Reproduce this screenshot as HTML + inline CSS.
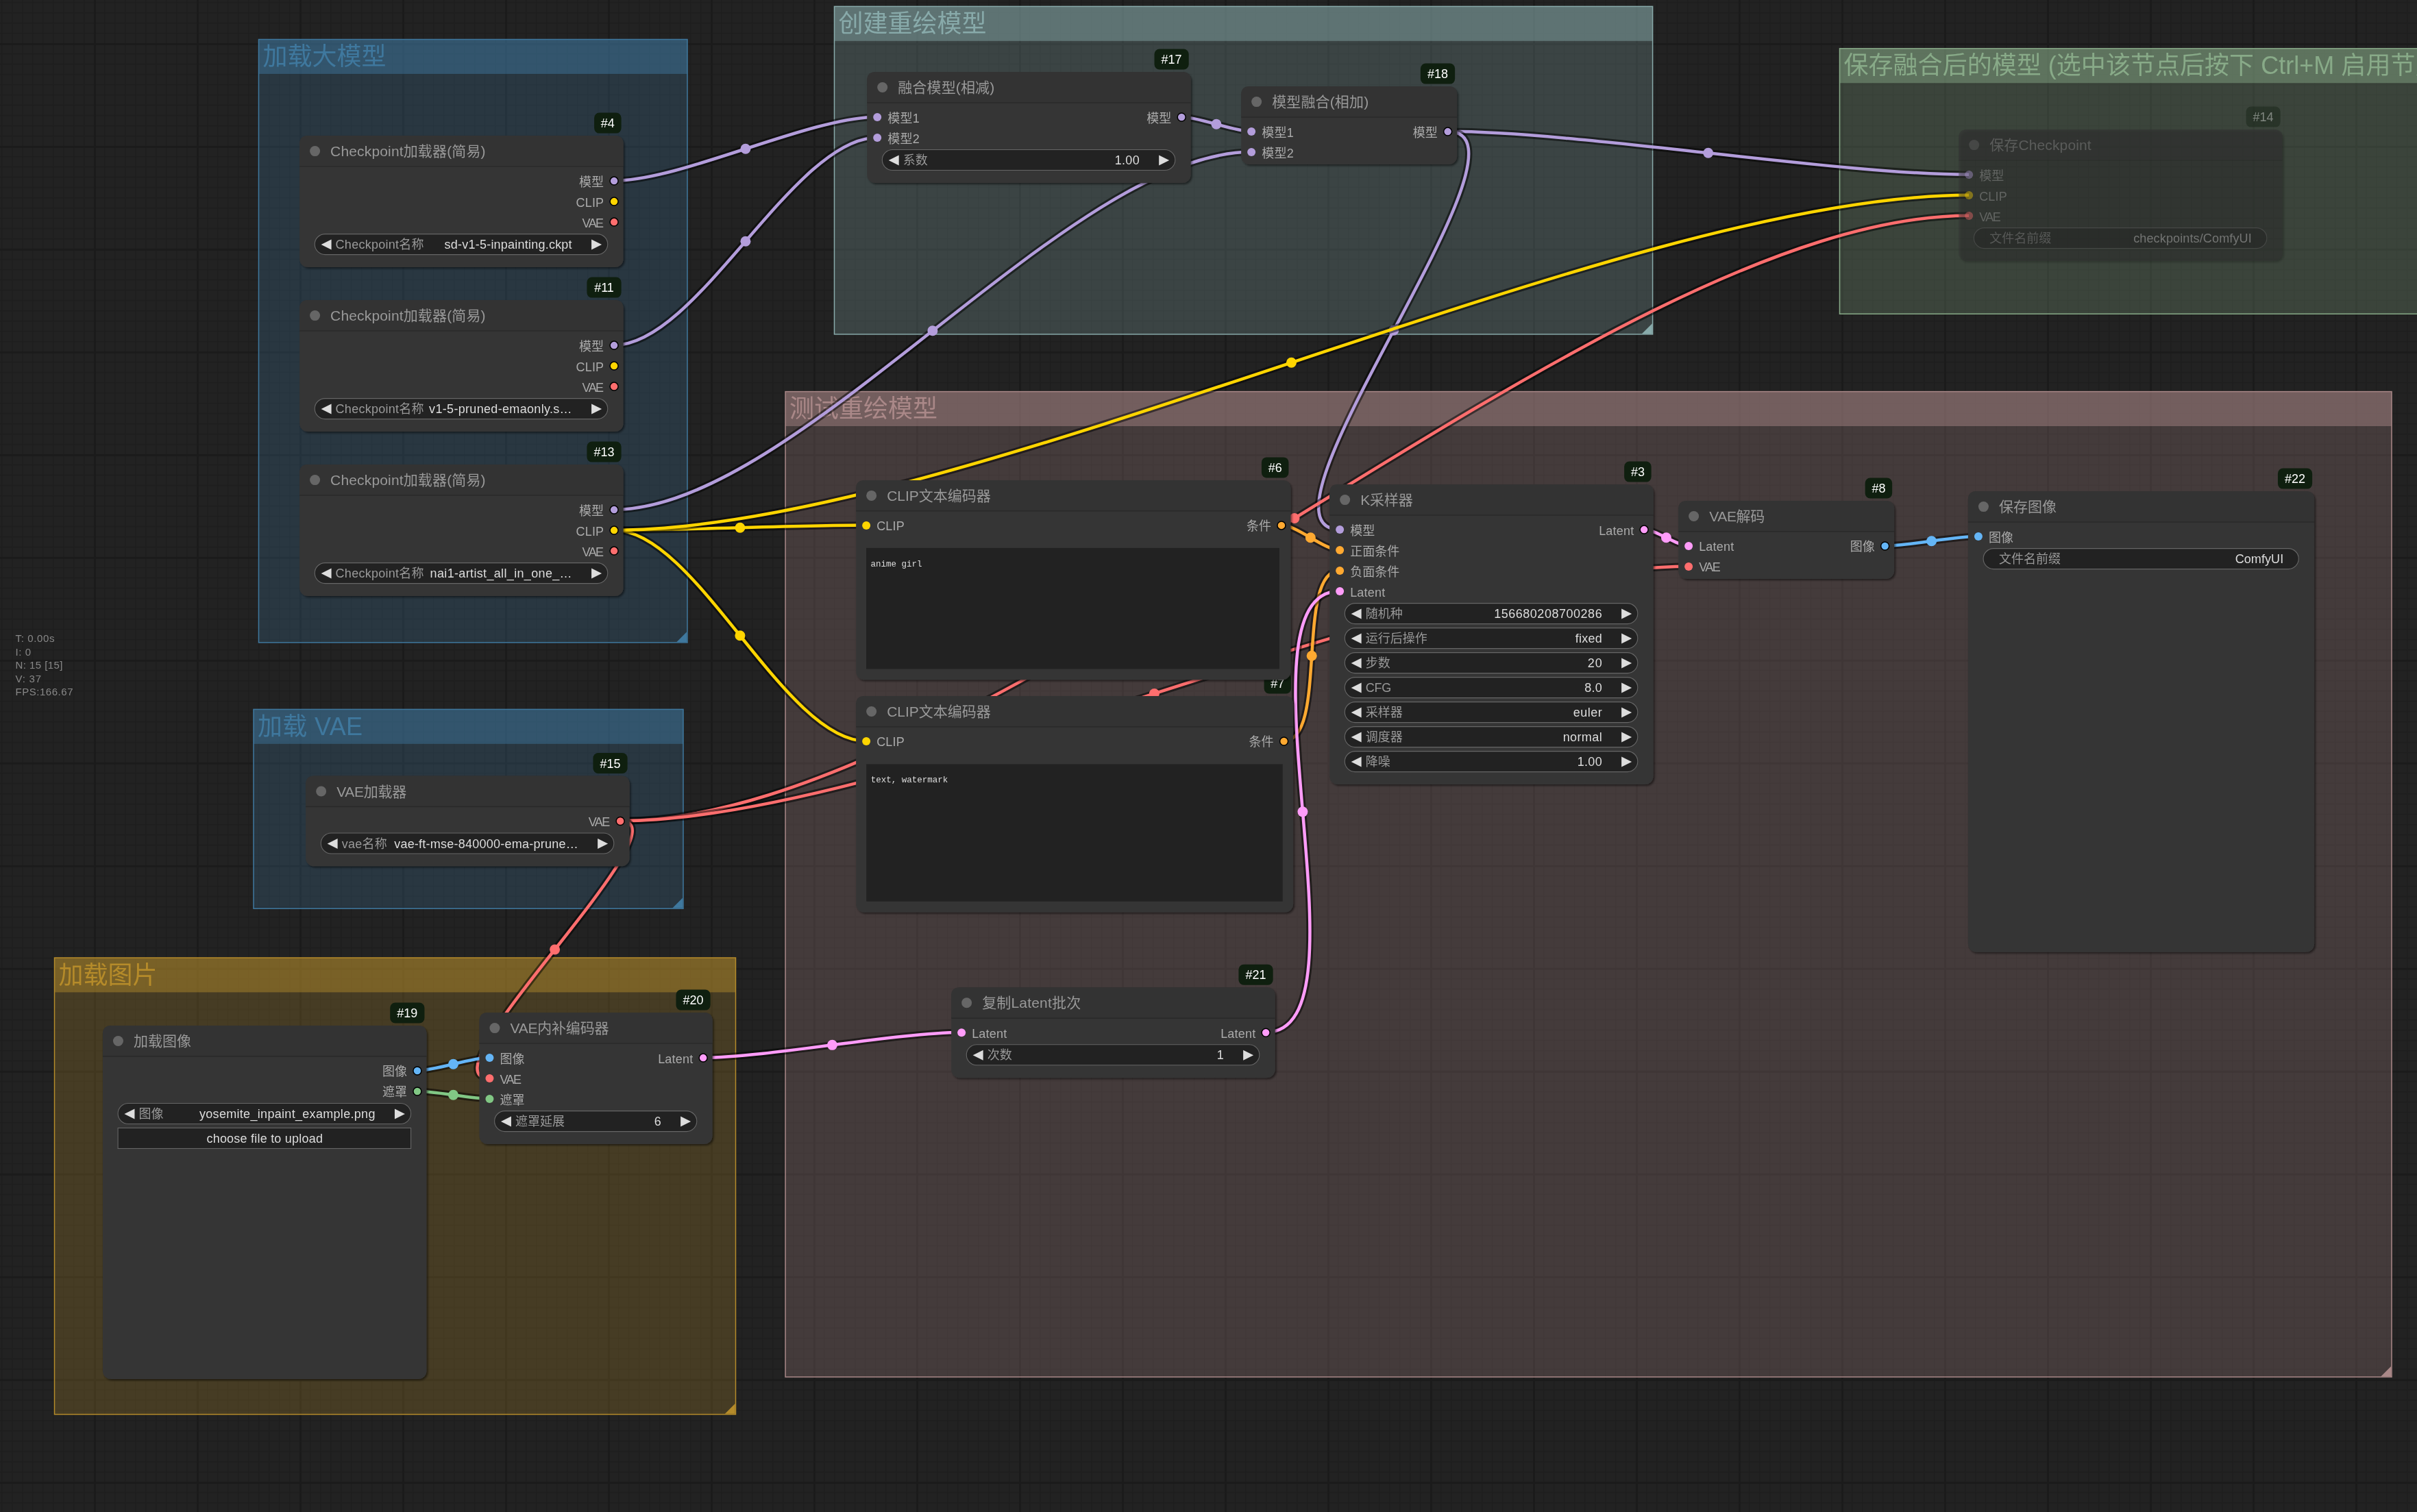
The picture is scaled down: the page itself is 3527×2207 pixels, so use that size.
<!DOCTYPE html>
<html lang="zh-CN"><head><meta charset="utf-8"><title>ComfyUI</title>
<style>html,body{margin:0;padding:0;background:#222;overflow:hidden}svg{display:block;will-change:transform}text{font-family:'Liberation Sans','Noto Sans CJK SC',sans-serif;white-space:pre}.t{font-size:21px;fill:#999}.s{font-size:18px;fill:#AAA}.wl{font-size:18px;fill:#999}.wv{font-size:18px;fill:#DDD}.e{text-anchor:end}.m{text-anchor:middle}.b{font-size:18px;fill:#fff;text-anchor:middle}.g{font-size:36px}.i{font-size:15px;fill:#888}.a{font-family:'Liberation Mono','Noto Sans CJK SC',monospace;font-size:12.5px;fill:#ddd}</style></head><body>
<svg xmlns="http://www.w3.org/2000/svg" width="3527" height="2207" viewBox="0 0 3527 2207">
<defs>
<pattern id="grid" x="136.94" y="62.87" width="150" height="150" patternUnits="userSpaceOnUse"><rect width="150" height="150" fill="#222"/><rect x="15" y="0" width="1.5" height="150" fill="#1e1e1e"/><rect x="0" y="15" width="150" height="1.5" fill="#1e1e1e"/><rect x="30" y="0" width="1.5" height="150" fill="#1e1e1e"/><rect x="0" y="30" width="150" height="1.5" fill="#1e1e1e"/><rect x="45" y="0" width="1.5" height="150" fill="#1e1e1e"/><rect x="0" y="45" width="150" height="1.5" fill="#1e1e1e"/><rect x="60" y="0" width="1.5" height="150" fill="#1e1e1e"/><rect x="0" y="60" width="150" height="1.5" fill="#1e1e1e"/><rect x="75" y="0" width="1.5" height="150" fill="#1e1e1e"/><rect x="0" y="75" width="150" height="1.5" fill="#1e1e1e"/><rect x="90" y="0" width="1.5" height="150" fill="#1e1e1e"/><rect x="0" y="90" width="150" height="1.5" fill="#1e1e1e"/><rect x="105" y="0" width="1.5" height="150" fill="#1e1e1e"/><rect x="0" y="105" width="150" height="1.5" fill="#1e1e1e"/><rect x="120" y="0" width="1.5" height="150" fill="#1e1e1e"/><rect x="0" y="120" width="150" height="1.5" fill="#1e1e1e"/><rect x="135" y="0" width="1.5" height="150" fill="#1e1e1e"/><rect x="0" y="135" width="150" height="1.5" fill="#1e1e1e"/><rect x="0" y="0" width="3" height="150" fill="#1b1b1b"/><rect x="0" y="0" width="150" height="3" fill="#1b1b1b"/></pattern>
<filter id="sh" x="-5%" y="-5%" width="110%" height="115%"><feDropShadow dx="2" dy="2" stdDeviation="1.5" flood-color="#000" flood-opacity="0.5"/></filter>
<filter id="bl" x="-5%" y="-10%" width="110%" height="120%"><feGaussianBlur stdDeviation="1.5"/></filter>
</defs>
<rect width="3527" height="2207" fill="url(#grid)"/>
<text class="i" x="22.5" y="937.4" textLength="57">T: 0.00s</text>
<text class="i" x="22.5" y="956.9" textLength="22.5">I: 0</text>
<text class="i" x="22.5" y="976.4" textLength="69">N: 15 [15]</text>
<text class="i" x="22.5" y="995.9" textLength="37.5">V: 37</text>
<text class="i" x="22.5" y="1015.4" textLength="84">FPS:166.67</text>
<g id="groups">
<rect x="377.5" y="57.5" width="625.5" height="50.4" fill="#3f789e" fill-opacity="0.467"/>
<rect x="377.5" y="57.5" width="625.5" height="880.4" fill="#3f789e" fill-opacity="0.25" stroke="#3f789e" stroke-width="1.5"/>
<path d="M1002.25 937.15L987.25 937.15L1002.25 922.15Z" fill="#3f789e"/>
<text class="g" x="383.5" y="95" fill="#3f789e">加载大模型</text>
<rect x="1217.5" y="9.4" width="1194.1" height="50.4" fill="#88AAAA" fill-opacity="0.467"/>
<rect x="1217.5" y="9.4" width="1194.1" height="478.5" fill="#88AAAA" fill-opacity="0.25" stroke="#88AAAA" stroke-width="1.5"/>
<path d="M2410.85 487.15L2395.85 487.15L2410.85 472.15Z" fill="#88AAAA"/>
<text class="g" x="1223.5" y="46.9" fill="#88AAAA">创建重绘模型</text>
<rect x="2684.5" y="70.8" width="915.5" height="50.4" fill="#88AA88" fill-opacity="0.467"/>
<rect x="2684.5" y="70.8" width="915.5" height="387.4" fill="#88AA88" fill-opacity="0.25" stroke="#88AA88" stroke-width="1.5"/>
<path d="M3599.25 457.45L3584.25 457.45L3599.25 442.45Z" fill="#88AA88"/>
<text class="g" x="2690.5" y="108.3" fill="#88AA88" textLength="882">保存融合后的模型 (选中该节点后按下 Ctrl+M 启用节点)</text>
<rect x="1146.1" y="571.6" width="2343.9" height="50.4" fill="#AA8888" fill-opacity="0.467"/>
<rect x="1146.1" y="571.6" width="2343.9" height="1438.3" fill="#AA8888" fill-opacity="0.25" stroke="#AA8888" stroke-width="1.5"/>
<path d="M3489.25 2009.15L3474.25 2009.15L3489.25 1994.15Z" fill="#AA8888"/>
<text class="g" x="1152.1" y="609.1" fill="#AA8888">测试重绘模型</text>
<rect x="370" y="1035.4" width="627" height="50.4" fill="#3f789e" fill-opacity="0.467"/>
<rect x="370" y="1035.4" width="627" height="290.8" fill="#3f789e" fill-opacity="0.25" stroke="#3f789e" stroke-width="1.5"/>
<path d="M996.25 1325.45L981.25 1325.45L996.25 1310.45Z" fill="#3f789e"/>
<text class="g" x="376" y="1072.9" fill="#3f789e" textLength="153">加载 VAE</text>
<rect x="79.5" y="1398" width="994" height="50.4" fill="#b58b2a" fill-opacity="0.467"/>
<rect x="79.5" y="1398" width="994" height="666.5" fill="#b58b2a" fill-opacity="0.25" stroke="#b58b2a" stroke-width="1.5"/>
<path d="M1072.75 2063.75L1057.75 2063.75L1072.75 2048.75Z" fill="#b58b2a"/>
<text class="g" x="85.5" y="1435.5" fill="#b58b2a">加载图片</text>
</g>
<g id="links" fill="none" transform="translate(-0.2 -0.3)">
<path d="M896.1 264.1C994.91 264.1 1181.39 171 1280.2 171" stroke="rgba(0,0,0,0.5)" stroke-width="10.5"/>
<path d="M896.1 264.1C994.91 264.1 1181.39 171 1280.2 171" stroke="#B39DDB" stroke-width="4.5"/>
<circle cx="1088.15" cy="217.55" r="7.5" fill="#B39DDB"/>
<path d="M896.1 504.1C1018.42 504.1 1157.88 201 1280.2 201" stroke="rgba(0,0,0,0.5)" stroke-width="10.5"/>
<path d="M896.1 504.1C1018.42 504.1 1157.88 201 1280.2 201" stroke="#B39DDB" stroke-width="4.5"/>
<circle cx="1088.15" cy="352.55" r="7.5" fill="#B39DDB"/>
<path d="M896.1 744.1C1162.73 744.1 1559.52 222.1 1826.15 222.1" stroke="rgba(0,0,0,0.5)" stroke-width="10.5"/>
<path d="M896.1 744.1C1162.73 744.1 1559.52 222.1 1826.15 222.1" stroke="#B39DDB" stroke-width="4.5"/>
<circle cx="1361.12" cy="483.1" r="7.5" fill="#B39DDB"/>
<path d="M1724.2 171C1750.23 171 1800.12 192.1 1826.15 192.1" stroke="rgba(0,0,0,0.5)" stroke-width="10.5"/>
<path d="M1724.2 171C1750.23 171 1800.12 192.1 1826.15 192.1" stroke="#B39DDB" stroke-width="4.5"/>
<circle cx="1775.17" cy="181.55" r="7.5" fill="#B39DDB"/>
<path d="M2112.65 192.1C2303.44 192.1 2682.41 255.1 2873.2 255.1" stroke="rgba(0,0,0,0.5)" stroke-width="10.5"/>
<path d="M2112.65 192.1C2303.44 192.1 2682.41 255.1 2873.2 255.1" stroke="#B39DDB" stroke-width="4.5"/>
<circle cx="2492.92" cy="223.6" r="7.5" fill="#B39DDB"/>
<path d="M2112.65 192.1C2263.14 192.1 1804.66 773.1 1955.15 773.1" stroke="rgba(0,0,0,0.5)" stroke-width="10.5"/>
<path d="M2112.65 192.1C2263.14 192.1 1804.66 773.1 1955.15 773.1" stroke="#B39DDB" stroke-width="4.5"/>
<circle cx="2033.9" cy="482.6" r="7.5" fill="#B39DDB"/>
<path d="M896.1 774.1C988.13 774.1 1172.12 766.9 1264.15 766.9" stroke="rgba(0,0,0,0.5)" stroke-width="10.5"/>
<path d="M896.1 774.1C988.13 774.1 1172.12 766.9 1264.15 766.9" stroke="#FFD500" stroke-width="4.5"/>
<circle cx="1080.12" cy="770.5" r="7.5" fill="#FFD500"/>
<path d="M896.1 774.1C1016.06 774.1 1144.19 1081.95 1264.15 1081.95" stroke="rgba(0,0,0,0.5)" stroke-width="10.5"/>
<path d="M896.1 774.1C1016.06 774.1 1144.19 1081.95 1264.15 1081.95" stroke="#FFD500" stroke-width="4.5"/>
<circle cx="1080.12" cy="928.02" r="7.5" fill="#FFD500"/>
<path d="M896.1 774.1C1405.27 774.1 2364.03 285.1 2873.2 285.1" stroke="rgba(0,0,0,0.5)" stroke-width="10.5"/>
<path d="M896.1 774.1C1405.27 774.1 2364.03 285.1 2873.2 285.1" stroke="#FFD500" stroke-width="4.5"/>
<circle cx="1884.65" cy="529.6" r="7.5" fill="#FFD500"/>
<path d="M905.15 1198.5C1444.46 1198.5 2333.89 315.1 2873.2 315.1" stroke="rgba(0,0,0,0.5)" stroke-width="10.5"/>
<path d="M905.15 1198.5C1444.46 1198.5 2333.89 315.1 2873.2 315.1" stroke="#FF6E6E" stroke-width="4.5"/>
<circle cx="1889.17" cy="756.8" r="7.5" fill="#FF6E6E"/>
<path d="M905.15 1198.5C1305.82 1198.5 2063.48 826.95 2464.15 826.95" stroke="rgba(0,0,0,0.5)" stroke-width="10.5"/>
<path d="M905.15 1198.5C1305.82 1198.5 2063.48 826.95 2464.15 826.95" stroke="#FF6E6E" stroke-width="4.5"/>
<circle cx="1684.65" cy="1012.73" r="7.5" fill="#FF6E6E"/>
<path d="M905.15 1198.5C1010.46 1198.5 609.14 1574.1 714.45 1574.1" stroke="rgba(0,0,0,0.5)" stroke-width="10.5"/>
<path d="M905.15 1198.5C1010.46 1198.5 609.14 1574.1 714.45 1574.1" stroke="#FF6E6E" stroke-width="4.5"/>
<circle cx="809.8" cy="1386.3" r="7.5" fill="#FF6E6E"/>
<path d="M1869.93 766.9C1893.07 766.9 1932 803.1 1955.15 803.1" stroke="rgba(0,0,0,0.5)" stroke-width="10.5"/>
<path d="M1869.93 766.9C1893.07 766.9 1932 803.1 1955.15 803.1" stroke="#FFA931" stroke-width="4.5"/>
<circle cx="1912.54" cy="785" r="7.5" fill="#FFA931"/>
<path d="M1873.6 1081.95C1939.07 1081.95 1889.68 833.1 1955.15 833.1" stroke="rgba(0,0,0,0.5)" stroke-width="10.5"/>
<path d="M1873.6 1081.95C1939.07 1081.95 1889.68 833.1 1955.15 833.1" stroke="#FFA931" stroke-width="4.5"/>
<circle cx="1914.38" cy="957.53" r="7.5" fill="#FFA931"/>
<path d="M608.95 1562.95C635.74 1562.95 687.66 1544.1 714.45 1544.1" stroke="rgba(0,0,0,0.5)" stroke-width="10.5"/>
<path d="M608.95 1562.95C635.74 1562.95 687.66 1544.1 714.45 1544.1" stroke="#64B5F6" stroke-width="4.5"/>
<circle cx="661.7" cy="1553.52" r="7.5" fill="#64B5F6"/>
<path d="M608.95 1592.95C635.47 1592.95 687.93 1604.1 714.45 1604.1" stroke="rgba(0,0,0,0.5)" stroke-width="10.5"/>
<path d="M608.95 1592.95C635.47 1592.95 687.93 1604.1 714.45 1604.1" stroke="#81C784" stroke-width="4.5"/>
<circle cx="661.7" cy="1598.52" r="7.5" fill="#81C784"/>
<path d="M1026.15 1544.1C1120.85 1544.1 1308.45 1507.2 1403.15 1507.2" stroke="rgba(0,0,0,0.5)" stroke-width="10.5"/>
<path d="M1026.15 1544.1C1120.85 1544.1 1308.45 1507.2 1403.15 1507.2" stroke="#FF9CF9" stroke-width="4.5"/>
<circle cx="1214.65" cy="1525.65" r="7.5" fill="#FF9CF9"/>
<path d="M1847.15 1507.2C2010.42 1507.2 1791.88 863.1 1955.15 863.1" stroke="rgba(0,0,0,0.5)" stroke-width="10.5"/>
<path d="M1847.15 1507.2C2010.42 1507.2 1791.88 863.1 1955.15 863.1" stroke="#FF9CF9" stroke-width="4.5"/>
<circle cx="1901.15" cy="1185.15" r="7.5" fill="#FF9CF9"/>
<path d="M2399.15 773.1C2416.46 773.1 2446.84 796.95 2464.15 796.95" stroke="rgba(0,0,0,0.5)" stroke-width="10.5"/>
<path d="M2399.15 773.1C2416.46 773.1 2446.84 796.95 2464.15 796.95" stroke="#FF9CF9" stroke-width="4.5"/>
<circle cx="2431.65" cy="785.02" r="7.5" fill="#FF9CF9"/>
<path d="M2750.65 796.95C2784.9 796.95 2852.7 783.1 2886.95 783.1" stroke="rgba(0,0,0,0.5)" stroke-width="10.5"/>
<path d="M2750.65 796.95C2784.9 796.95 2852.7 783.1 2886.95 783.1" stroke="#64B5F6" stroke-width="4.5"/>
<circle cx="2818.8" cy="790.03" r="7.5" fill="#64B5F6"/>
</g>
<g id="n4">
<rect x="867.1" y="164.6" width="39.5" height="30" rx="7.5" fill="#0F1F0F"/>
<text class="b" x="886.85" y="186.1">#4</text>
<rect x="437.1" y="198.1" width="472.5" height="192" rx="12" fill="#353535" filter="url(#sh)"/>
<path d="M449.1 198.1H897.6Q909.6 198.1 909.6 210.1V243.1H437.1V210.1Q437.1 198.1 449.1 198.1Z" fill="#333"/>
<rect x="437.1" y="242.35" width="472.5" height="1.5" fill="#000" fill-opacity="0.2"/>
<circle cx="459.6" cy="220.6" r="7.5" fill="#666"/>
<text class="t" x="482.1" y="228.1" textLength="226.5">Checkpoint加载器(简易)</text>
<circle cx="896.1" cy="264.1" r="6" fill="#B39DDB" stroke="#000" stroke-width="1.5"/>
<text class="s e" x="881.1" y="271.6">模型</text>
<circle cx="896.1" cy="294.1" r="6" fill="#FFD500" stroke="#000" stroke-width="1.5"/>
<text class="s e" x="881.1" y="301.6" textLength="40.5">CLIP</text>
<circle cx="896.1" cy="324.1" r="6" fill="#FF6E6E" stroke="#000" stroke-width="1.5"/>
<text class="s e" x="881.1" y="331.6" textLength="31.5">VAE</text>
<rect x="459.25" y="341.6" width="427.5" height="30" rx="15" fill="#222" stroke="#666" stroke-width="1.1"/>
<path d="M483.6 349.6L468.6 357.1L483.6 364.6ZM863.1 349.6L878.1 357.1L863.1 364.6Z" fill="#DDD"/>
<text class="wl" x="489.6" y="363.1" textLength="129">Checkpoint名称</text>
<text class="wv e" x="834.6" y="363.1" textLength="186">sd-v1-5-inpainting.ckpt</text>
</g>
<g id="n11">
<rect x="856.4" y="404.6" width="50.2" height="30" rx="7.5" fill="#0F1F0F"/>
<text class="b" x="881.5" y="426.1">#11</text>
<rect x="437.1" y="438.1" width="472.5" height="192" rx="12" fill="#353535" filter="url(#sh)"/>
<path d="M449.1 438.1H897.6Q909.6 438.1 909.6 450.1V483.1H437.1V450.1Q437.1 438.1 449.1 438.1Z" fill="#333"/>
<rect x="437.1" y="482.35" width="472.5" height="1.5" fill="#000" fill-opacity="0.2"/>
<circle cx="459.6" cy="460.6" r="7.5" fill="#666"/>
<text class="t" x="482.1" y="468.1" textLength="226.5">Checkpoint加载器(简易)</text>
<circle cx="896.1" cy="504.1" r="6" fill="#B39DDB" stroke="#000" stroke-width="1.5"/>
<text class="s e" x="881.1" y="511.6">模型</text>
<circle cx="896.1" cy="534.1" r="6" fill="#FFD500" stroke="#000" stroke-width="1.5"/>
<text class="s e" x="881.1" y="541.6" textLength="40.5">CLIP</text>
<circle cx="896.1" cy="564.1" r="6" fill="#FF6E6E" stroke="#000" stroke-width="1.5"/>
<text class="s e" x="881.1" y="571.6" textLength="31.5">VAE</text>
<rect x="459.25" y="581.6" width="427.5" height="30" rx="15" fill="#222" stroke="#666" stroke-width="1.1"/>
<path d="M483.6 589.6L468.6 597.1L483.6 604.6ZM863.1 589.6L878.1 597.1L863.1 604.6Z" fill="#DDD"/>
<text class="wl" x="489.6" y="603.1" textLength="129">Checkpoint名称</text>
<text class="wv e" x="834.6" y="603.1" textLength="208.5">v1-5-pruned-emaonly.s…</text>
</g>
<g id="n13">
<rect x="856.4" y="644.6" width="50.2" height="30" rx="7.5" fill="#0F1F0F"/>
<text class="b" x="881.5" y="666.1">#13</text>
<rect x="437.1" y="678.1" width="472.5" height="192" rx="12" fill="#353535" filter="url(#sh)"/>
<path d="M449.1 678.1H897.6Q909.6 678.1 909.6 690.1V723.1H437.1V690.1Q437.1 678.1 449.1 678.1Z" fill="#333"/>
<rect x="437.1" y="722.35" width="472.5" height="1.5" fill="#000" fill-opacity="0.2"/>
<circle cx="459.6" cy="700.6" r="7.5" fill="#666"/>
<text class="t" x="482.1" y="708.1" textLength="226.5">Checkpoint加载器(简易)</text>
<circle cx="896.1" cy="744.1" r="6" fill="#B39DDB" stroke="#000" stroke-width="1.5"/>
<text class="s e" x="881.1" y="751.6">模型</text>
<circle cx="896.1" cy="774.1" r="6" fill="#FFD500" stroke="#000" stroke-width="1.5"/>
<text class="s e" x="881.1" y="781.6" textLength="40.5">CLIP</text>
<circle cx="896.1" cy="804.1" r="6" fill="#FF6E6E" stroke="#000" stroke-width="1.5"/>
<text class="s e" x="881.1" y="811.6" textLength="31.5">VAE</text>
<rect x="459.25" y="821.6" width="427.5" height="30" rx="15" fill="#222" stroke="#666" stroke-width="1.1"/>
<path d="M483.6 829.6L468.6 837.1L483.6 844.6ZM863.1 829.6L878.1 837.1L863.1 844.6Z" fill="#DDD"/>
<text class="wl" x="489.6" y="843.1" textLength="129">Checkpoint名称</text>
<text class="wv e" x="834.6" y="843.1" textLength="207">nai1-artist_all_in_one_…</text>
</g>
<g id="n15">
<rect x="865.45" y="1099" width="50.2" height="30" rx="7.5" fill="#0F1F0F"/>
<text class="b" x="890.55" y="1120.5">#15</text>
<rect x="446.15" y="1132.5" width="472.5" height="132" rx="12" fill="#353535" filter="url(#sh)"/>
<path d="M458.15 1132.5H906.65Q918.65 1132.5 918.65 1144.5V1177.5H446.15V1144.5Q446.15 1132.5 458.15 1132.5Z" fill="#333"/>
<rect x="446.15" y="1176.75" width="472.5" height="1.5" fill="#000" fill-opacity="0.2"/>
<circle cx="468.65" cy="1155" r="7.5" fill="#666"/>
<text class="t" x="491.15" y="1162.5" textLength="102">VAE加载器</text>
<circle cx="905.15" cy="1198.5" r="6" fill="#FF6E6E" stroke="#000" stroke-width="1.5"/>
<text class="s e" x="890.15" y="1206" textLength="31.5">VAE</text>
<rect x="468.3" y="1216" width="427.5" height="30" rx="15" fill="#222" stroke="#666" stroke-width="1.1"/>
<path d="M492.65 1224L477.65 1231.5L492.65 1239ZM872.15 1224L887.15 1231.5L872.15 1239Z" fill="#DDD"/>
<text class="wl" x="498.65" y="1237.5" textLength="66">vae名称</text>
<text class="wv e" x="843.65" y="1237.5" textLength="268.5">vae-ft-mse-840000-ema-prune…</text>
</g>
<g id="n17">
<rect x="1684.5" y="71.5" width="50.2" height="30" rx="7.5" fill="#0F1F0F"/>
<text class="b" x="1709.6" y="93">#17</text>
<rect x="1265.2" y="105" width="472.5" height="162" rx="12" fill="#353535" filter="url(#sh)"/>
<path d="M1277.2 105H1725.7Q1737.7 105 1737.7 117V150H1265.2V117Q1265.2 105 1277.2 105Z" fill="#333"/>
<rect x="1265.2" y="149.25" width="472.5" height="1.5" fill="#000" fill-opacity="0.2"/>
<circle cx="1287.7" cy="127.5" r="7.5" fill="#666"/>
<text class="t" x="1310.2" y="135" textLength="141">融合模型(相减)</text>
<circle cx="1280.2" cy="171" r="6" fill="#B39DDB"/>
<text class="s" x="1295.2" y="178.5" textLength="46.5">模型1</text>
<circle cx="1280.2" cy="201" r="6" fill="#B39DDB"/>
<text class="s" x="1295.2" y="208.5" textLength="46.5">模型2</text>
<circle cx="1724.2" cy="171" r="6" fill="#B39DDB" stroke="#000" stroke-width="1.5"/>
<text class="s e" x="1709.2" y="178.5">模型</text>
<rect x="1287.35" y="218.5" width="427.5" height="30" rx="15" fill="#222" stroke="#666" stroke-width="1.1"/>
<path d="M1311.7 226.5L1296.7 234L1311.7 241.5ZM1691.2 226.5L1706.2 234L1691.2 241.5Z" fill="#DDD"/>
<text class="wl" x="1317.7" y="240">系数</text>
<text class="wv e" x="1662.7" y="240" textLength="36">1.00</text>
</g>
<g id="n18">
<rect x="2072.95" y="92.6" width="50.2" height="30" rx="7.5" fill="#0F1F0F"/>
<text class="b" x="2098.05" y="114.1">#18</text>
<rect x="1811.15" y="126.1" width="315" height="114" rx="12" fill="#353535" filter="url(#sh)"/>
<path d="M1823.15 126.1H2114.15Q2126.15 126.1 2126.15 138.1V171.1H1811.15V138.1Q1811.15 126.1 1823.15 126.1Z" fill="#333"/>
<rect x="1811.15" y="170.35" width="315" height="1.5" fill="#000" fill-opacity="0.2"/>
<circle cx="1833.65" cy="148.6" r="7.5" fill="#666"/>
<text class="t" x="1856.15" y="156.1" textLength="141">模型融合(相加)</text>
<circle cx="1826.15" cy="192.1" r="6" fill="#B39DDB"/>
<text class="s" x="1841.15" y="199.6" textLength="46.5">模型1</text>
<circle cx="1826.15" cy="222.1" r="6" fill="#B39DDB"/>
<text class="s" x="1841.15" y="229.6" textLength="46.5">模型2</text>
<circle cx="2112.65" cy="192.1" r="6" fill="#B39DDB" stroke="#000" stroke-width="1.5"/>
<text class="s e" x="2097.65" y="199.6">模型</text>
</g>
<g id="n14">
<rect x="3277.5" y="155.6" width="50.2" height="30" rx="7.5" fill="#0F1F0F" opacity="0.4"/>
<text class="b" x="3302.6" y="177.1" opacity="0.4">#14</text>
<rect x="2860.2" y="191.1" width="472.5" height="192" rx="12" fill="#000" opacity="0.2" filter="url(#bl)"/>
<rect x="2858.2" y="189.1" width="472.5" height="192" rx="12" fill="#353535" opacity="0.4"/>
<path d="M2870.2 189.1H3318.7Q3330.7 189.1 3330.7 201.1V234.1H2858.2V201.1Q2858.2 189.1 2870.2 189.1Z" fill="#333" opacity="0.4"/>
<rect x="2858.2" y="233.35" width="472.5" height="1.5" fill="#000" fill-opacity="0.08"/>
<circle cx="2880.7" cy="211.6" r="7.5" fill="#666" opacity="0.4"/>
<text class="t" x="2903.2" y="219.1" opacity="0.4" textLength="148.5">保存Checkpoint</text>
<circle cx="2873.2" cy="255.1" r="6" fill="#B39DDB" opacity="0.4"/>
<text class="s" x="2888.2" y="262.6" opacity="0.4">模型</text>
<circle cx="2873.2" cy="285.1" r="6" fill="#FFD500" opacity="0.4"/>
<text class="s" x="2888.2" y="292.6" opacity="0.4" textLength="40.5">CLIP</text>
<circle cx="2873.2" cy="315.1" r="6" fill="#FF6E6E" opacity="0.4"/>
<text class="s" x="2888.2" y="322.6" opacity="0.4" textLength="31.5">VAE</text>
<rect x="2880.35" y="332.6" width="427.5" height="30" rx="15" fill="#222" stroke="#666" stroke-width="1.1" opacity="0.4"/>
<text class="wl" x="2903.2" y="354.1" opacity="0.4">文件名前缀</text>
<text class="wv e" x="3285.7" y="354.1" opacity="0.4" textLength="172.5">checkpoints/ComfyUI</text>
</g>
<g id="n7">
<rect x="1844.6" y="982.45" width="39.5" height="30" rx="7.5" fill="#0F1F0F"/>
<text class="b" x="1864.35" y="1003.95">#7</text>
<rect x="1249.15" y="1015.95" width="637.95" height="315.9" rx="12" fill="#353535" filter="url(#sh)"/>
<path d="M1261.15 1015.95H1875.1Q1887.1 1015.95 1887.1 1027.95V1060.95H1249.15V1027.95Q1249.15 1015.95 1261.15 1015.95Z" fill="#333"/>
<rect x="1249.15" y="1060.2" width="637.95" height="1.5" fill="#000" fill-opacity="0.2"/>
<circle cx="1271.65" cy="1038.45" r="7.5" fill="#666"/>
<text class="t" x="1294.15" y="1045.95" textLength="151.5">CLIP文本编码器</text>
<circle cx="1264.15" cy="1081.95" r="6" fill="#FFD500"/>
<text class="s" x="1279.15" y="1089.45" textLength="40.5">CLIP</text>
<circle cx="1873.6" cy="1081.95" r="6" fill="#FFA931" stroke="#000" stroke-width="1.5"/>
<text class="s e" x="1858.6" y="1089.45">条件</text>
<rect x="1264.2" y="1115.4" width="607.5" height="200.3" fill="#222"/>
<text class="a" x="1270.7" y="1142.4">text, watermark</text>
</g>
<g id="n6">
<rect x="1840.93" y="667.4" width="39.5" height="30" rx="7.5" fill="#0F1F0F"/>
<text class="b" x="1860.68" y="688.9">#6</text>
<rect x="1249.15" y="700.9" width="634.28" height="291.45" rx="12" fill="#353535" filter="url(#sh)"/>
<path d="M1261.15 700.9H1871.43Q1883.43 700.9 1883.43 712.9V745.9H1249.15V712.9Q1249.15 700.9 1261.15 700.9Z" fill="#333"/>
<rect x="1249.15" y="745.15" width="634.28" height="1.5" fill="#000" fill-opacity="0.2"/>
<circle cx="1271.65" cy="723.4" r="7.5" fill="#666"/>
<text class="t" x="1294.15" y="730.9" textLength="151.5">CLIP文本编码器</text>
<circle cx="1264.15" cy="766.9" r="6" fill="#FFD500"/>
<text class="s" x="1279.15" y="774.4" textLength="40.5">CLIP</text>
<circle cx="1869.93" cy="766.9" r="6" fill="#FFA931" stroke="#000" stroke-width="1.5"/>
<text class="s e" x="1854.93" y="774.4">条件</text>
<rect x="1264" y="799.9" width="602.9" height="176.6" fill="#222"/>
<text class="a" x="1270.5" y="826.9">anime girl</text>
</g>
<g id="n3">
<rect x="2370.15" y="673.6" width="39.5" height="30" rx="7.5" fill="#0F1F0F"/>
<text class="b" x="2389.9" y="695.1">#3</text>
<rect x="1940.15" y="707.1" width="472.5" height="438" rx="12" fill="#353535" filter="url(#sh)"/>
<path d="M1952.15 707.1H2400.65Q2412.65 707.1 2412.65 719.1V752.1H1940.15V719.1Q1940.15 707.1 1952.15 707.1Z" fill="#333"/>
<rect x="1940.15" y="751.35" width="472.5" height="1.5" fill="#000" fill-opacity="0.2"/>
<circle cx="1962.65" cy="729.6" r="7.5" fill="#666"/>
<text class="t" x="1985.15" y="737.1" textLength="76.5">K采样器</text>
<circle cx="1955.15" cy="773.1" r="6" fill="#B39DDB"/>
<text class="s" x="1970.15" y="780.6">模型</text>
<circle cx="1955.15" cy="803.1" r="6" fill="#FFA931"/>
<text class="s" x="1970.15" y="810.6">正面条件</text>
<circle cx="1955.15" cy="833.1" r="6" fill="#FFA931"/>
<text class="s" x="1970.15" y="840.6">负面条件</text>
<circle cx="1955.15" cy="863.1" r="6" fill="#FF9CF9"/>
<text class="s" x="1970.15" y="870.6" textLength="51">Latent</text>
<circle cx="2399.15" cy="773.1" r="6" fill="#FF9CF9" stroke="#000" stroke-width="1.5"/>
<text class="s e" x="2384.15" y="780.6" textLength="51">Latent</text>
<rect x="1962.3" y="880.6" width="427.5" height="30" rx="15" fill="#222" stroke="#666" stroke-width="1.1"/>
<path d="M1986.65 888.6L1971.65 896.1L1986.65 903.6ZM2366.15 888.6L2381.15 896.1L2366.15 903.6Z" fill="#DDD"/>
<text class="wl" x="1992.65" y="902.1">随机种</text>
<text class="wv e" x="2337.65" y="902.1" textLength="157.5">156680208700286</text>
<rect x="1962.3" y="916.6" width="427.5" height="30" rx="15" fill="#222" stroke="#666" stroke-width="1.1"/>
<path d="M1986.65 924.6L1971.65 932.1L1986.65 939.6ZM2366.15 924.6L2381.15 932.1L2366.15 939.6Z" fill="#DDD"/>
<text class="wl" x="1992.65" y="938.1">运行后操作</text>
<text class="wv e" x="2337.65" y="938.1" textLength="39">fixed</text>
<rect x="1962.3" y="952.6" width="427.5" height="30" rx="15" fill="#222" stroke="#666" stroke-width="1.1"/>
<path d="M1986.65 960.6L1971.65 968.1L1986.65 975.6ZM2366.15 960.6L2381.15 968.1L2366.15 975.6Z" fill="#DDD"/>
<text class="wl" x="1992.65" y="974.1">步数</text>
<text class="wv e" x="2337.65" y="974.1" textLength="21">20</text>
<rect x="1962.3" y="988.6" width="427.5" height="30" rx="15" fill="#222" stroke="#666" stroke-width="1.1"/>
<path d="M1986.65 996.6L1971.65 1004.1L1986.65 1011.6ZM2366.15 996.6L2381.15 1004.1L2366.15 1011.6Z" fill="#DDD"/>
<text class="wl" x="1992.65" y="1010.1" textLength="37.5">CFG</text>
<text class="wv e" x="2337.65" y="1010.1" textLength="25.5">8.0</text>
<rect x="1962.3" y="1024.6" width="427.5" height="30" rx="15" fill="#222" stroke="#666" stroke-width="1.1"/>
<path d="M1986.65 1032.6L1971.65 1040.1L1986.65 1047.6ZM2366.15 1032.6L2381.15 1040.1L2366.15 1047.6Z" fill="#DDD"/>
<text class="wl" x="1992.65" y="1046.1">采样器</text>
<text class="wv e" x="2337.65" y="1046.1" textLength="42">euler</text>
<rect x="1962.3" y="1060.6" width="427.5" height="30" rx="15" fill="#222" stroke="#666" stroke-width="1.1"/>
<path d="M1986.65 1068.6L1971.65 1076.1L1986.65 1083.6ZM2366.15 1068.6L2381.15 1076.1L2366.15 1083.6Z" fill="#DDD"/>
<text class="wl" x="1992.65" y="1082.1">调度器</text>
<text class="wv e" x="2337.65" y="1082.1" textLength="57">normal</text>
<rect x="1962.3" y="1096.6" width="427.5" height="30" rx="15" fill="#222" stroke="#666" stroke-width="1.1"/>
<path d="M1986.65 1104.6L1971.65 1112.1L1986.65 1119.6ZM2366.15 1104.6L2381.15 1112.1L2366.15 1119.6Z" fill="#DDD"/>
<text class="wl" x="1992.65" y="1118.1">降噪</text>
<text class="wv e" x="2337.65" y="1118.1" textLength="36">1.00</text>
</g>
<g id="n8">
<rect x="2721.65" y="697.45" width="39.5" height="30" rx="7.5" fill="#0F1F0F"/>
<text class="b" x="2741.4" y="718.95">#8</text>
<rect x="2449.15" y="730.95" width="315" height="114" rx="12" fill="#353535" filter="url(#sh)"/>
<path d="M2461.15 730.95H2752.15Q2764.15 730.95 2764.15 742.95V775.95H2449.15V742.95Q2449.15 730.95 2461.15 730.95Z" fill="#333"/>
<rect x="2449.15" y="775.2" width="315" height="1.5" fill="#000" fill-opacity="0.2"/>
<circle cx="2471.65" cy="753.45" r="7.5" fill="#666"/>
<text class="t" x="2494.15" y="760.95" textLength="81">VAE解码</text>
<circle cx="2464.15" cy="796.95" r="6" fill="#FF9CF9"/>
<text class="s" x="2479.15" y="804.45" textLength="51">Latent</text>
<circle cx="2464.15" cy="826.95" r="6" fill="#FF6E6E"/>
<text class="s" x="2479.15" y="834.45" textLength="31.5">VAE</text>
<circle cx="2750.65" cy="796.95" r="6" fill="#64B5F6" stroke="#000" stroke-width="1.5"/>
<text class="s e" x="2735.65" y="804.45">图像</text>
</g>
<g id="n22">
<rect x="3323.95" y="683.6" width="50.2" height="30" rx="7.5" fill="#0F1F0F"/>
<text class="b" x="3349.05" y="705.1">#22</text>
<rect x="2871.95" y="717.1" width="505.2" height="672.75" rx="12" fill="#353535" filter="url(#sh)"/>
<path d="M2883.95 717.1H3365.15Q3377.15 717.1 3377.15 729.1V762.1H2871.95V729.1Q2871.95 717.1 2883.95 717.1Z" fill="#333"/>
<rect x="2871.95" y="761.35" width="505.2" height="1.5" fill="#000" fill-opacity="0.2"/>
<circle cx="2894.45" cy="739.6" r="7.5" fill="#666"/>
<text class="t" x="2916.95" y="747.1">保存图像</text>
<circle cx="2886.95" cy="783.1" r="6" fill="#64B5F6"/>
<text class="s" x="2901.95" y="790.6">图像</text>
<rect x="2894.1" y="800.6" width="460.2" height="30" rx="15" fill="#222" stroke="#666" stroke-width="1.1"/>
<text class="wl" x="2916.95" y="822.1">文件名前缀</text>
<text class="wv e" x="3332.15" y="822.1" textLength="70.5">ComfyUI</text>
</g>
<g id="n21">
<rect x="1807.45" y="1407.7" width="50.2" height="30" rx="7.5" fill="#0F1F0F"/>
<text class="b" x="1832.55" y="1429.2">#21</text>
<rect x="1388.15" y="1441.2" width="472.5" height="132" rx="12" fill="#353535" filter="url(#sh)"/>
<path d="M1400.15 1441.2H1848.65Q1860.65 1441.2 1860.65 1453.2V1486.2H1388.15V1453.2Q1388.15 1441.2 1400.15 1441.2Z" fill="#333"/>
<rect x="1388.15" y="1485.45" width="472.5" height="1.5" fill="#000" fill-opacity="0.2"/>
<circle cx="1410.65" cy="1463.7" r="7.5" fill="#666"/>
<text class="t" x="1433.15" y="1471.2" textLength="144">复制Latent批次</text>
<circle cx="1403.15" cy="1507.2" r="6" fill="#FF9CF9"/>
<text class="s" x="1418.15" y="1514.7" textLength="51">Latent</text>
<circle cx="1847.15" cy="1507.2" r="6" fill="#FF9CF9" stroke="#000" stroke-width="1.5"/>
<text class="s e" x="1832.15" y="1514.7" textLength="51">Latent</text>
<rect x="1410.3" y="1524.7" width="427.5" height="30" rx="15" fill="#222" stroke="#666" stroke-width="1.1"/>
<path d="M1434.65 1532.7L1419.65 1540.2L1434.65 1547.7ZM1814.15 1532.7L1829.15 1540.2L1814.15 1547.7Z" fill="#DDD"/>
<text class="wl" x="1440.65" y="1546.2">次数</text>
<text class="wv e" x="1785.65" y="1546.2">1</text>
</g>
<g id="n19">
<rect x="569.25" y="1463.45" width="50.2" height="30" rx="7.5" fill="#0F1F0F"/>
<text class="b" x="594.35" y="1484.95">#19</text>
<rect x="149.95" y="1496.95" width="472.5" height="516" rx="12" fill="#353535" filter="url(#sh)"/>
<path d="M161.95 1496.95H610.45Q622.45 1496.95 622.45 1508.95V1541.95H149.95V1508.95Q149.95 1496.95 161.95 1496.95Z" fill="#333"/>
<rect x="149.95" y="1541.2" width="472.5" height="1.5" fill="#000" fill-opacity="0.2"/>
<circle cx="172.45" cy="1519.45" r="7.5" fill="#666"/>
<text class="t" x="194.95" y="1526.95">加载图像</text>
<circle cx="608.95" cy="1562.95" r="6" fill="#64B5F6" stroke="#000" stroke-width="1.5"/>
<text class="s e" x="593.95" y="1570.45">图像</text>
<circle cx="608.95" cy="1592.95" r="6" fill="#81C784" stroke="#000" stroke-width="1.5"/>
<text class="s e" x="593.95" y="1600.45">遮罩</text>
<rect x="172.1" y="1610.45" width="427.5" height="30" rx="15" fill="#222" stroke="#666" stroke-width="1.1"/>
<path d="M196.45 1618.45L181.45 1625.95L196.45 1633.45ZM575.95 1618.45L590.95 1625.95L575.95 1633.45Z" fill="#DDD"/>
<text class="wl" x="202.45" y="1631.95">图像</text>
<text class="wv e" x="547.45" y="1631.95" textLength="256.5">yosemite_inpaint_example.png</text>
<rect x="172.1" y="1646.45" width="427.5" height="30" fill="#222" stroke="#666" stroke-width="1.1"/>
<text class="wv m" x="386.2" y="1667.95" textLength="169.5">choose file to upload</text>
</g>
<g id="n20">
<rect x="986.45" y="1444.6" width="50.2" height="30" rx="7.5" fill="#0F1F0F"/>
<text class="b" x="1011.55" y="1466.1">#20</text>
<rect x="699.45" y="1478.1" width="340.2" height="192" rx="12" fill="#353535" filter="url(#sh)"/>
<path d="M711.45 1478.1H1027.65Q1039.65 1478.1 1039.65 1490.1V1523.1H699.45V1490.1Q699.45 1478.1 711.45 1478.1Z" fill="#333"/>
<rect x="699.45" y="1522.35" width="340.2" height="1.5" fill="#000" fill-opacity="0.2"/>
<circle cx="721.95" cy="1500.6" r="7.5" fill="#666"/>
<text class="t" x="744.45" y="1508.1" textLength="144">VAE内补编码器</text>
<circle cx="714.45" cy="1544.1" r="6" fill="#64B5F6"/>
<text class="s" x="729.45" y="1551.6">图像</text>
<circle cx="714.45" cy="1574.1" r="6" fill="#FF6E6E"/>
<text class="s" x="729.45" y="1581.6" textLength="31.5">VAE</text>
<circle cx="714.45" cy="1604.1" r="6" fill="#81C784"/>
<text class="s" x="729.45" y="1611.6">遮罩</text>
<circle cx="1026.15" cy="1544.1" r="6" fill="#FF9CF9" stroke="#000" stroke-width="1.5"/>
<text class="s e" x="1011.15" y="1551.6" textLength="51">Latent</text>
<rect x="721.6" y="1621.6" width="295.2" height="30" rx="15" fill="#222" stroke="#666" stroke-width="1.1"/>
<path d="M745.95 1629.6L730.95 1637.1L745.95 1644.6ZM993.15 1629.6L1008.15 1637.1L993.15 1644.6Z" fill="#DDD"/>
<text class="wl" x="751.95" y="1643.1">遮罩延展</text>
<text class="wv e" x="964.65" y="1643.1">6</text>
</g>
</svg></body></html>
